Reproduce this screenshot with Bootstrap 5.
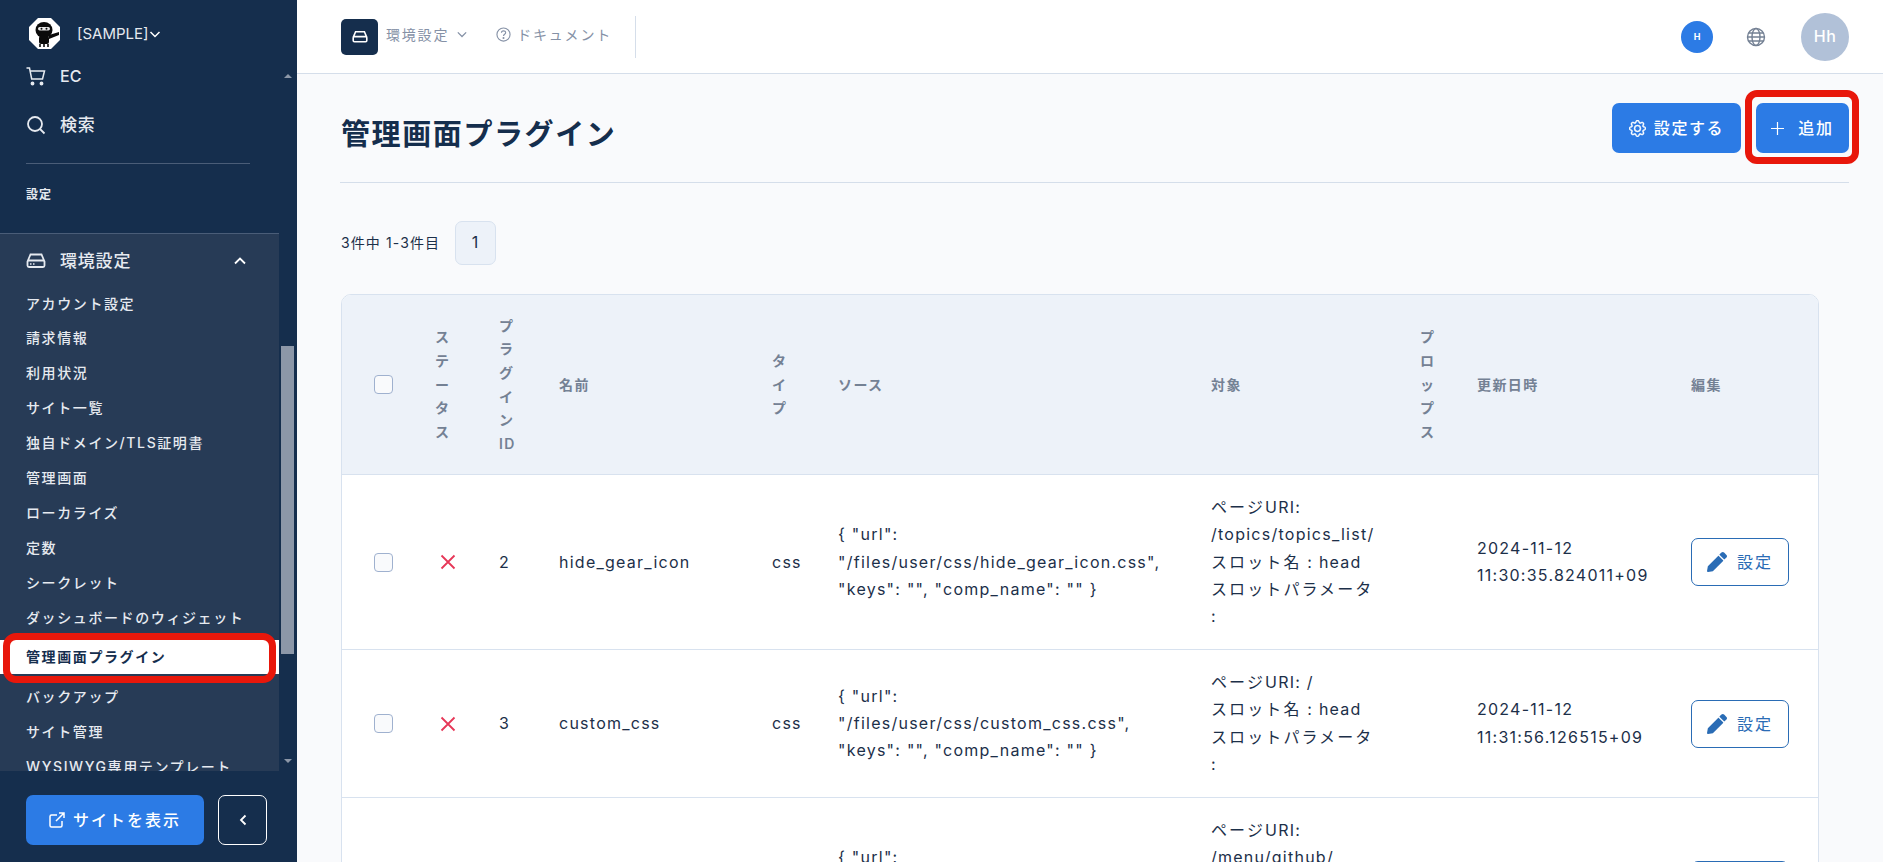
<!DOCTYPE html>
<html lang="ja">
<head>
<meta charset="utf-8">
<title>管理画面プラグイン</title>
<link href="https://cdn.jsdelivr.net/npm/bootstrap@5.3.0/dist/css/bootstrap.min.css" rel="stylesheet">
<style>
html,body{height:100%}
body{font-family:"Inter","Noto Sans CJK JP",sans-serif;font-size:16px;line-height:1.7;letter-spacing:1.6px;color:#1c2f49;background:#f9fafc;overflow:hidden}
.shell{height:862px;width:1883px}
.side{width:297px;background:#152e4d;color:#e6eaf0;flex:none}
.side-head{height:62px;padding:18px 26px 0 29px;font-size:15px;letter-spacing:0}
.logo-ic{width:31px;height:31px;margin-right:17px}
.side-scroll{height:709px;overflow:hidden}
.side-body{width:279px;flex:none;overflow:hidden}
.top-link{height:50px;padding-left:26px;font-size:17px;font-weight:500;color:#e6eaf0;gap:14px;letter-spacing:.8px}
.top-link svg{width:20px;height:20px}
.top-link.ec{height:26px;margin:2px 0 10px;letter-spacing:.2px;font-size:16px}
.side-rule{height:1px;background:#4a5d78;margin:13px 26px 0 26px;width:224px}
.side-label{font-size:12px;font-weight:600;padding:21px 0 0 26px;height:69px;letter-spacing:1px}
.panel{background:#273b56;border-top:1px solid #4a5d78;height:539px;overflow:hidden}
.panel-head{height:54px;margin-bottom:-2px;padding:0 33px 0 26px;font-size:17px;font-weight:500;gap:14px;letter-spacing:.8px}
.panel-head svg.hd{width:20px;height:20px}
.sub-link{height:34.9px;padding-left:26px;font-size:14px;font-weight:500;color:#e6eaf0;white-space:nowrap;display:flex;align-items:center}
.sub-link.now{background:#fff;color:#152e4d;font-weight:700;position:relative;height:34px;margin:5px 0 6px}
.mark-red{position:absolute;border:7.5px solid #e8170b;border-radius:13px;pointer-events:none}
.mark-side{left:3px;top:-7px;width:273px;height:50px}
.mark-add{left:-11px;top:-13px;width:114px;height:74px;border-radius:12px}
.track{width:18px;flex:none}
.arrow-up,.arrow-down{width:0;height:0;border-left:4px solid transparent;border-right:4px solid transparent;margin:0 auto}
.arrow-up{border-bottom:4px solid #8c97a8;margin-top:12px}
.arrow-down{border-top:4px solid #8c97a8;position:relative;top:-8px;margin-top:auto}
.thumb{width:13px;height:308px;background:#8c97a8;margin:268px 0 0 2px}
.side-foot{height:91px;padding:24px 30px 17px 26px;gap:14px}
.foot-main{width:178px;height:50px;background:#2c7be5;border:0;color:#fff;border-radius:7px;font-size:16px;font-weight:500;gap:8px;letter-spacing:2px}
.foot-main:hover{background:#2c7be5;color:#fff}
.foot-back{width:49px;height:50px;border:1px solid #fff;color:#fff;border-radius:7px;padding:0}
.topbar{height:74px;background:#fff;border-bottom:1px solid #d5deea;padding:0 34px 0 44px}
.box-ic{width:37px;height:36px;background:#152e4d;border-radius:5px;margin-right:8px}
.top-txt{font-size:14px;color:#8591a6;letter-spacing:1.8px;padding-bottom:4px}
.doc-link{gap:6px;margin-left:29px}
.top-sep{width:1px;height:42px;background:#d5deea;margin-left:23px}
.h-dot{width:32px;height:32px;border-radius:50%;background:#2c7be5;color:#fff;font-size:9px;font-weight:700;letter-spacing:0}
.globe{margin:0 35px 0 33px;width:20px;height:20px}
.ava{width:48px;height:48px;border-radius:50%;background:#b1c1d8;color:#fff;font-size:16px;font-weight:500;letter-spacing:.6px}
.content{padding:29px 34px 0 44px}
.title-row{height:80px;border-bottom:1px solid #d5deea;margin-left:-1px;padding-left:1px;padding-bottom:29px}
.page-ttl{font-size:29px;font-weight:700;color:#152e4d;margin:0;line-height:1.2;padding-top:15px}
.act{height:50px;background:#2c7be5;border:0;color:#fff;border-radius:7px;font-size:16px;font-weight:500;gap:8px}
.act:hover{background:#2c7be5;color:#fff}
.act-set{width:129px}
.act-add{width:93px;margin-left:15px;position:relative}
.pager-row{margin-top:38px;font-size:14px;letter-spacing:1.1px;gap:15px;height:44px}
.pg{width:41px;height:44px;background:#edf2f9;border:1px solid #d8e2ef;border-radius:7px;font-size:16px}
.tbl-wrap{margin-top:29px;width:1478px;border:1px solid #d8e2ef;border-radius:10px;background:#fff;overflow:hidden}
.plug-table{table-layout:fixed;width:1476px;--bs-table-bg:transparent;--bs-table-color:#1c2f49;--bs-table-border-color:#d8e2ef}
.plug-table th{background:#edf2f9;color:#748194;font-size:14px;font-weight:600;padding:18.500px 24px;letter-spacing:1.4px;vertical-align:middle;line-height:23.7px}
.plug-table td{padding:19px 4px 19px 24px;vertical-align:middle;letter-spacing:1.25px}
.plug-table th:first-child,.plug-table td:first-child{padding-left:32px;padding-right:0}
.ja{letter-spacing:2.1px}
.c1{width:69px}.c2{width:64px}.c3{width:60px}.c4{width:213px}.c5{width:66px}.c6{width:373px}.c7{width:209px}.c8{width:57px}.c9{width:214px}.c10{width:151px}
.plug-table .form-check-input{width:19px;height:19px;margin:0;border-color:#9fb1cf;background-color:#f9fafc;border-radius:4px;display:block}
.x-ic{width:16px;height:16px;margin-left:5px;display:block}
.edit-btn{width:98px;height:48px;padding:0;border:1px solid #2a6cb5;color:#2a6cb5;border-radius:7px;background:#fff;gap:10px;font-size:16px;letter-spacing:2px}
.edit-btn svg{width:20px;height:20px}
</style>
</head>
<body>
<div class="shell d-flex">
  <aside class="side d-flex flex-column">
    <div class="side-head d-flex align-items-start">
      <svg class="logo-ic flex-shrink-0" viewBox="0 0 31 31"><polygon points="9,0 22,0 31,9 31,22 22,31 9,31 0,22 0,9" fill="#fff"/><ellipse cx="15" cy="12" rx="8.500" ry="8" fill="#0b0b0b"/><rect x="10" y="18" width="10" height="8" rx="2" fill="#0b0b0b"/><rect x="9" y="9" width="12" height="3.500" rx="1.700" fill="#e8e8e8"/><circle cx="12.500" cy="10.700" r="1" fill="#0b0b0b"/><circle cx="17.500" cy="10.700" r="1" fill="#0b0b0b"/><path d="M20 17 L30 14 L30 17 L20 21Z" fill="#0b0b0b"/><path d="M11 26v3M15 26v3M19 26v3" stroke="#0b0b0b" stroke-width="1.600"/></svg>
      <span class="d-flex align-items-center lh-1 pt-1 mt-1">[SAMPLE]<svg width="12" height="12" viewBox="0 0 12 12" fill="none" stroke="#fff" stroke-width="1.500"><path d="M1.500 4l4.500 4.500L10.500 4"/></svg></span>
    </div>
    <div class="side-scroll d-flex">
      <div class="side-body">
        <div class="top-link ec d-flex align-items-center"><svg viewBox="0 0 20 20" fill="none" stroke="#e6eaf0" stroke-width="1.500"><path d="M.5 1h3l2.200 11h10.800l2-8H4.300"/><circle cx="6.500" cy="16.500" r="1.200" fill="#e6eaf0"/><circle cx="15.500" cy="16.500" r="1.200" fill="#e6eaf0"/></svg><span>EC</span></div>
        <div class="top-link d-flex align-items-center"><svg viewBox="0 0 20 20" fill="none" stroke="#e6eaf0" stroke-width="1.800"><circle cx="9" cy="9" r="7"/><path d="M14 14l4.500 4.500"/></svg><span>検索</span></div>
        <div class="side-rule"></div>
        <div class="side-label">設定</div>
        <div class="panel">
          <div class="panel-head d-flex align-items-center"><svg class="hd" viewBox="0 0 20 20" fill="none" stroke="#e6eaf0" stroke-width="1.800"><path d="M1.500 10.500L4.500 3.500h11l3 7M1.500 10.500v4A1.500 1.500 0 0 0 3 16h14a1.500 1.500 0 0 0 1.500-1.500v-4A1.500 1.500 0 0 0 17 9.500H3A1.500 1.500 0 0 0 1.500 10.500z"/><path d="M4 13h1.500M7 13h1.500" stroke-width="1.400"/></svg><span class="flex-grow-1">環境設定</span><svg width="12" height="12" viewBox="0 0 12 12" fill="none" stroke="#fff" stroke-width="1.800"><path d="M1 8.500l5-5 5 5"/></svg></div>
          <div class="sub-link">アカウント設定</div>
          <div class="sub-link">請求情報</div>
          <div class="sub-link">利用状況</div>
          <div class="sub-link">サイト一覧</div>
          <div class="sub-link">独自ドメイン/TLS証明書</div>
          <div class="sub-link">管理画面</div>
          <div class="sub-link">ローカライズ</div>
          <div class="sub-link">定数</div>
          <div class="sub-link">シークレット</div>
          <div class="sub-link">ダッシュボードのウィジェット</div>
          <div class="sub-link now">管理画面プラグイン<span class="mark-red mark-side"></span></div>
          <div class="sub-link">バックアップ</div>
          <div class="sub-link">サイト管理</div>
          <div class="sub-link">WYSIWYG専用テンプレート</div>
        </div>
      </div>
      <div class="track d-flex flex-column">
        <div class="arrow-up"></div>
        <div class="thumb"></div>
        <div class="arrow-down"></div>
      </div>
    </div>
    <div class="side-foot d-flex">
      <a class="btn foot-main d-flex align-items-center justify-content-center"><svg width="16" height="16" viewBox="0 0 16 16" fill="none" stroke="#fff" stroke-width="1.500"><path d="M8 3H2.500A1.500 1.500 0 0 0 1 4.500v9A1.500 1.500 0 0 0 2.500 15h9a1.500 1.500 0 0 0 1.500-1.500V9M10 1h5v5M15 1L7 9"/></svg>サイトを表示</a>
      <a class="btn foot-back d-flex align-items-center justify-content-center"><svg width="10" height="12" viewBox="0 0 10 12" fill="none" stroke="#fff" stroke-width="1.800"><path d="M7.500 1.500L3 6l4.500 4.500"/></svg></a>
    </div>
  </aside>
  <main class="flex-grow-1 d-flex flex-column overflow-hidden">
    <header class="topbar d-flex align-items-center flex-shrink-0">
      <span class="box-ic d-flex align-items-center justify-content-center"><svg width="16" height="16" viewBox="0 0 20 20" fill="none" stroke="#fff" stroke-width="2"><path d="M1.500 10.500L4.500 3.500h11l3 7M1.500 10.500v4A1.500 1.500 0 0 0 3 16h14a1.500 1.500 0 0 0 1.500-1.500v-4A1.500 1.500 0 0 0 17 9.500H3A1.500 1.500 0 0 0 1.500 10.500z"/></svg></span>
      <span class="top-txt d-flex align-items-center gap-2">環境設定<svg width="10" height="10" viewBox="0 0 12 12" fill="none" stroke="#8591a6" stroke-width="1.500"><path d="M1 4l5 5 5-5"/></svg></span>
      <span class="top-txt doc-link d-flex align-items-center"><svg width="15" height="15" viewBox="0 0 16 16" fill="none" stroke="#8591a6" stroke-width="1.200"><circle cx="8" cy="8" r="7"/><path d="M5.800 6.200C5.800 3.500 10.300 3.500 10.300 6c0 1.700-2.300 1.700-2.300 3.500"/><circle cx="8" cy="11.800" r=".5" fill="#8591a6"/></svg>ドキュメント</span>
      <span class="top-sep"></span>
      <span class="flex-grow-1"></span>
      <span class="h-dot d-flex align-items-center justify-content-center">H</span>
      <svg class="globe" viewBox="0 0 20 20" fill="none" stroke="#748194" stroke-width="1.400"><circle cx="10" cy="10" r="8.500"/><ellipse cx="10" cy="10" rx="4" ry="8.500"/><path d="M1.500 10h17M2.700 6h14.600M2.700 14h14.600"/></svg>
      <span class="ava d-flex align-items-center justify-content-center">Hh</span>
    </header>
    <div class="content flex-grow-1">
      <div class="title-row d-flex justify-content-between align-items-start">
        <h1 class="page-ttl">管理画面プラグイン</h1>
        <div class="d-flex">
          <a class="btn act act-set d-flex align-items-center justify-content-center"><svg width="17" height="17" viewBox="0 0 16 16" fill="#fff" stroke="#fff" stroke-width=".4"><path d="M8 4.754a3.246 3.246 0 1 0 0 6.492 3.246 3.246 0 0 0 0-6.492zM5.754 8a2.246 2.246 0 1 1 4.492 0 2.246 2.246 0 0 1-4.492 0z"/><path d="M9.796 1.343c-.527-1.79-3.065-1.79-3.592 0l-.094.319a.873.873 0 0 1-1.255.52l-.292-.16c-1.64-.892-3.433.902-2.54 2.541l.159.292a.873.873 0 0 1-.52 1.255l-.319.094c-1.79.527-1.79 3.065 0 3.592l.319.094a.873.873 0 0 1 .52 1.255l-.16.292c-.892 1.64.901 3.434 2.541 2.54l.292-.159a.873.873 0 0 1 1.255.52l.094.319c.527 1.79 3.065 1.79 3.592 0l.094-.319a.873.873 0 0 1 1.255-.52l.292.16c1.64.893 3.434-.902 2.54-2.541l-.159-.292a.873.873 0 0 1 .52-1.255l.319-.094c1.79-.527 1.79-3.065 0-3.592l-.319-.094a.873.873 0 0 1-.52-1.255l.16-.292c.893-1.64-.902-3.433-2.541-2.54l-.292.159a.873.873 0 0 1-1.255-.52l-.094-.319zm-2.633.283c.246-.835 1.428-.835 1.674 0l.094.319a1.873 1.873 0 0 0 2.693 1.115l.291-.16c.764-.415 1.6.42 1.184 1.185l-.159.292a1.873 1.873 0 0 0 1.116 2.692l.318.094c.835.246.835 1.428 0 1.674l-.319.094a1.873 1.873 0 0 0-1.115 2.693l.16.291c.415.764-.42 1.6-1.185 1.184l-.291-.159a1.873 1.873 0 0 0-2.693 1.116l-.094.318c-.246.835-1.428.835-1.674 0l-.094-.319a1.873 1.873 0 0 0-2.692-1.115l-.292.16c-.764.415-1.6-.42-1.184-1.185l.159-.291A1.873 1.873 0 0 0 1.945 8.930l-.319-.094c-.835-.246-.835-1.428 0-1.674l.319-.094A1.873 1.873 0 0 0 3.060 4.377l-.16-.292c-.415-.764.42-1.600 1.185-1.184l.292.159a1.873 1.873 0 0 0 2.692-1.115l.094-.319z"/></svg>設定する</a>
          <a class="btn act act-add d-flex align-items-center justify-content-center"><svg width="13" height="13" viewBox="0 0 13 13" stroke="#fff" stroke-width="1.200"><path d="M6.500 0v13M0 6.500h13"/></svg>&nbsp;追加<span class="mark-red mark-add"></span></a>
        </div>
      </div>
      <div class="pager-row d-flex align-items-center"><span>3件中 1-3件目</span><span class="pg d-flex align-items-center justify-content-center">1</span></div>
      <div class="tbl-wrap">
        <table class="table plug-table mb-0">
          <colgroup><col class="c1"><col class="c2"><col class="c3"><col class="c4"><col class="c5"><col class="c6"><col class="c7"><col class="c8"><col class="c9"><col class="c10"></colgroup>
          <thead><tr><th><input class="form-check-input" type="checkbox"></th><th>ステータス</th><th>プラグインID</th><th>名前</th><th>タイプ</th><th>ソース</th><th>対象</th><th>プロップス</th><th>更新日時</th><th>編集</th></tr></thead>
          <tbody>
            <tr>
              <td><input class="form-check-input" type="checkbox"></td>
              <td><svg class="x-ic" viewBox="0 0 16 16" stroke="#e63757" stroke-width="1.800"><path d="M1.500 1.500l13 13M14.500 1.500l-13 13"/></svg></td>
              <td>2</td><td>hide_gear_icon</td><td>css</td>
              <td>{ "url":<br>"/files/user/css/hide_gear_icon.css",<br>"keys": "", "comp_name": "" }</td>
              <td><span class="ja">ページ</span>URI:<br>/topics/topics_list/<br><span class="ja">スロット名</span> : head<br><span class="ja">スロットパラメータ</span><br>:</td>
              <td></td>
              <td>2024-11-12<br>11:30:35.824011+09</td>
              <td><a class="btn edit-btn d-flex align-items-center justify-content-center"><svg viewBox="0 0 512 512" fill="#2a6cb5"><path d="M497.900 142.100l-46.100 46.100c-4.700 4.700-12.300 4.700-17 0l-111-111c-4.700-4.700-4.700-12.300 0-17l46.100-46.100c18.700-18.700 49.100-18.700 67.900 0l60.100 60.100c18.800 18.700 18.800 49.100 0 67.900zM284.200 99.800L21.600 362.400.4 483.900c-2.900 16.400 11.400 30.600 27.800 27.800l121.500-21.300 262.600-262.600c4.700-4.700 4.700-12.300 0-17l-111-111c-4.800-4.700-12.400-4.700-17.100 0z"/></svg>設定</a></td>
            </tr>
            <tr>
              <td><input class="form-check-input" type="checkbox"></td>
              <td><svg class="x-ic" viewBox="0 0 16 16" stroke="#e63757" stroke-width="1.800"><path d="M1.500 1.500l13 13M14.500 1.500l-13 13"/></svg></td>
              <td>3</td><td>custom_css</td><td>css</td>
              <td>{ "url":<br>"/files/user/css/custom_css.css",<br>"keys": "", "comp_name": "" }</td>
              <td><span class="ja">ページ</span>URI: /<br><span class="ja">スロット名</span> : head<br><span class="ja">スロットパラメータ</span><br>:</td>
              <td></td>
              <td>2024-11-12<br>11:31:56.126515+09</td>
              <td><a class="btn edit-btn d-flex align-items-center justify-content-center"><svg viewBox="0 0 512 512" fill="#2a6cb5"><path d="M497.900 142.100l-46.100 46.100c-4.700 4.700-12.300 4.700-17 0l-111-111c-4.700-4.700-4.700-12.300 0-17l46.100-46.100c18.700-18.700 49.100-18.700 67.900 0l60.100 60.100c18.800 18.700 18.800 49.100 0 67.900zM284.200 99.800L21.600 362.400.4 483.900c-2.900 16.400 11.400 30.600 27.800 27.800l121.500-21.300 262.600-262.600c4.700-4.700 4.700-12.300 0-17l-111-111c-4.800-4.700-12.400-4.700-17.100 0z"/></svg>設定</a></td>
            </tr>
            <tr>
              <td></td><td></td><td></td><td></td><td></td>
              <td>{ "url":<br><br><br></td>
              <td><span class="ja">ページ</span>URI:<br>/menu/github/<br><br><br><br></td>
              <td></td><td></td>
              <td><a class="btn edit-btn d-flex align-items-center justify-content-center"></a></td>
            </tr>
          </tbody>
        </table>
      </div>
    </div>
  </main>
</div>
<script src="https://cdn.jsdelivr.net/npm/bootstrap@5.3.0/dist/js/bootstrap.bundle.min.js"></script>
</body>
</html>
